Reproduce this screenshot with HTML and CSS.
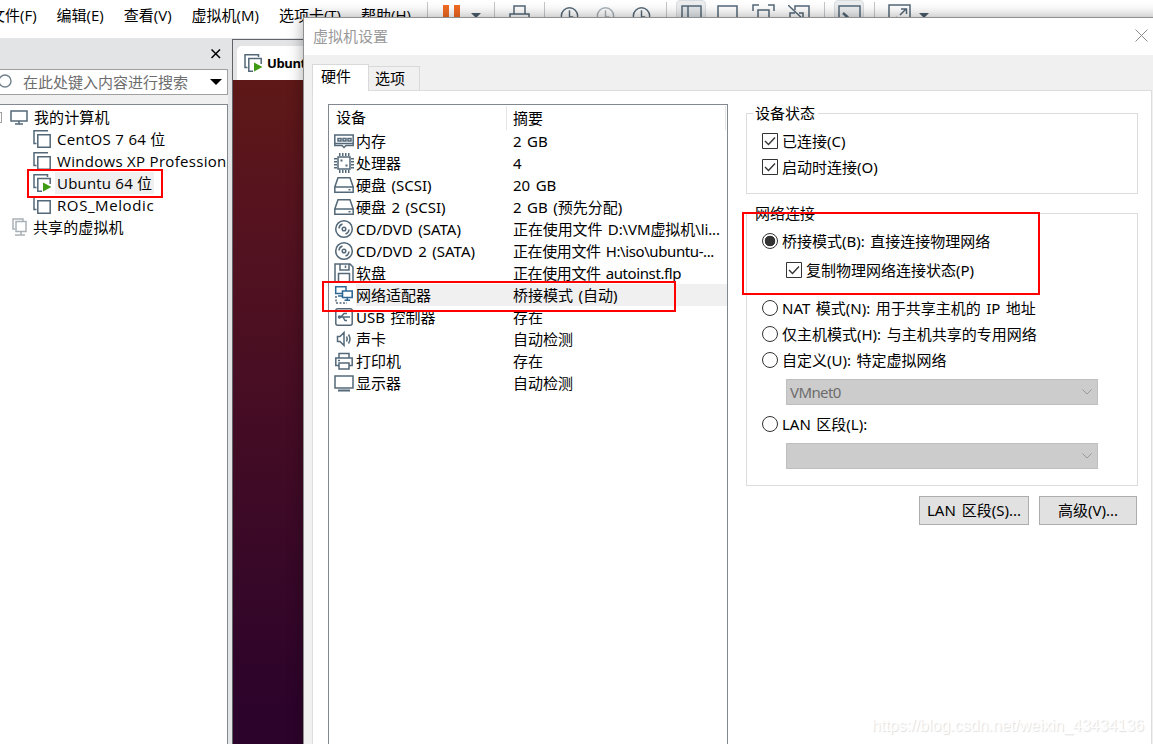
FILE: index.html
```
<!DOCTYPE html>
<html lang="zh-CN">
<head>
    <meta charset="UTF-8">
    <title>虚拟机设置</title>
    <link rel="stylesheet" href="styles.css">
</head>
<body>

    <!-- shared icons -->
    <svg class="defs">
        <symbol id="vm" viewBox="0 0 18 18">
            <path class="line" d="M3.5 13.5H1V.8H15" />
            <path class="line" d="M4.8 4.8H17.2V17.2H4.8Z" />
        </symbol>
        <symbol id="vm-on" viewBox="0 0 18 18">
            <path class="line" d="M3.5 13.5H1V.8H14.5V3" />
            <path class="line" d="M9 17.2H4.8V4.5H17.2V10" />
            <path fill="#3f9c12" d="M10 8.5L18.5 13L10 17.5Z" />
        </symbol>
        <symbol id="clock" viewBox="0 0 20 20">
            <circle class="line" cx="10" cy="10" r="8.6" />
            <path class="line" d="M10 4V11H14" />
        </symbol>
        <symbol id="disk" viewBox="0 0 20 18">
            <path class="line" d="M4 1.7H16L19.2 11V16.2H.8V11ZM.8 11H19.2" />
            <path class="line" d="M14.5 13.7H16.5" />
        </symbol>
        <symbol id="disc" viewBox="0 0 20 20">
            <circle class="line" cx="10" cy="10" r="8.3" />
            <circle class="line" cx="10" cy="10" r="1.8" />
            <path class="line" d="M5 9.5Q5.2 6 8.5 5M15 10.5Q14.8 14 11.5 15" />
        </symbol>
        <symbol id="check" viewBox="0 0 16 16">
            <path d="M.5.5H15.5V15.5H.5Z" fill="#fff" stroke="#333" />
            <path d="M3 8L6.5 11.4L13 4.6" fill="none" stroke="#333" stroke-width="1.4" />
        </symbol>
        <symbol id="chevron" viewBox="0 0 10 6">
            <path d="M.5.5L5 5L9.5.5" fill="none" stroke="#999" />
        </symbol>
    </svg>

    <div class="app">
        <div class="menubar">
            <span>文件(F)</span>
            <span>编辑(E)</span>
            <span>查看(V)</span>
            <span>虚拟机(M)</span>
            <span>选项卡(T)</span>
            <span class="last">帮助(H)</span>
            <div class="toolbar">
                <i class="sep"></i>
                <svg class="t-pause" width="17" height="22"><path fill="#f26a21" d="M0 0H6V22H0ZM11 0H17V22H11Z" /></svg>
                <svg class="t-arrow" width="10" height="22"><path fill="#4a5c6a" d="M0 8H10L5 13Z" /></svg>
                <i class="sep s2"></i>
                <svg class="t-print" width="21" height="22"><path class="line" d="M5 9V1H16V9M1 16V9H20V16M5 20V14H16V20" /></svg>
                <i class="sep s3"></i>
                <svg class="t-clock" width="19" height="20"><use href="#clock" /></svg>
                <svg class="t-clock2 dim" width="19" height="20"><use href="#clock" /></svg>
                <svg class="t-clock2" width="19" height="20"><use href="#clock" /></svg>
                <i class="sep s4"></i>
                <div class="pressed p1"><svg width="21" height="22"><path fill="#e3e7ea" d="M1 1H20V22H1Z" /><path class="line" d="M1 22V1H20V22M7 1V22" /></svg></div>
                <svg class="t-rect" width="21" height="22"><path class="line" d="M1 17V1H20V17Z" /></svg>
                <svg class="t-full" width="23" height="22"><path class="line" d="M1 7V1H7M16 1H22V7M6 20V6H17V20" /></svg>
                <svg class="t-unity" width="23" height="22"><path class="line" d="M7 5V1H21V14H17M2 20V8H7M11 8H15V13" /><path class="line" d="M0 0L16 15" /></svg>
                <i class="sep s5"></i>
                <div class="pressed p2"><svg width="23" height="22"><path class="line" d="M1 22V1H22V22" /><path class="line thick" d="M5 8L9 11.5L5 15" /></svg></div>
                <i class="sep s6"></i>
                <svg class="t-fit" width="23" height="22"><path class="line" d="M1 22V1H22V22M13 5H18.5V10M18 5L12 11M9 13L4 17" /></svg>
                <svg class="t-arrow2" width="10" height="22"><path fill="#4a5c6a" d="M0 9H10L5 14Z" /></svg>
            </div>
        </div>

        <div class="main">
            <div class="sidebar">
                <div class="side-head">
                    <svg width="10" height="10"><path d="M.5.5L9 9M9 .5L.5 9" stroke="#000" stroke-width="1.5" /></svg>
                </div>
                <div class="search">
                    <svg width="15" height="18"><circle cx="5" cy="8" r="6" fill="none" stroke="#70808c" stroke-width="1.4" /></svg>
                    <span>在此处键入内容进行搜索</span>
                    <svg width="12" height="7"><path d="M0 0H12L6 6Z" /></svg>
                </div>
                <div class="tree">
                    <div class="node root">
                        <i class="expander"></i>
                        <svg width="18" height="16"><path class="line" d="M1 2H17V12H1ZM9 12V15M5 15H13" /></svg>
                        <span>我的计算机</span>
                    </div>
                    <div class="node"><svg width="18" height="18"><use href="#vm" /></svg><span>CentOS 7 64 位</span></div>
                    <div class="node"><svg width="18" height="18"><use href="#vm" /></svg><span>Windows XP Profession</span></div>
                    <div class="node"><svg width="18" height="18"><use href="#vm-on" /></svg><span class="selected">Ubuntu 64 位</span></div>
                    <div class="node"><svg width="18" height="18"><use href="#vm" /></svg><span class="loose">ROS_Melodic</span></div>
                    <div class="node shared">
                        <svg width="15" height="18"><path class="line" d="M3 11H1V1H11V3M4 3.5H14V13.5H4ZM9 14V17M3 17H13" /></svg>
                        <span>共享的虚拟机</span>
                    </div>
                </div>
            </div>
            <div class="vm-pane">
                <div class="vm-tabs">
                    <div class="vm-tab"><svg width="18" height="18"><use href="#vm-on" /></svg><span>Ubuntu</span></div>
                </div>
                <div class="vm-screen"></div>
            </div>
        </div>
    </div>

    <div class="dialog">
        <div class="titlebar">
            <span>虚拟机设置</span>
            <svg width="13" height="13"><path d="M.5.5L12.5 12.5M12.5.5L.5 12.5" stroke="#8a8a8a" /></svg>
        </div>
        <div class="tabs">
            <div class="tab active">硬件</div>
            <div class="tab">选项</div>
        </div>
        <div class="page">
            <div class="devices">
                <div class="row head"><span class="name">设备</span><span class="info">摘要</span></div>
                <div class="row">
                    <svg width="20" height="18"><path class="line" d="M.8 3H19.2V13.5H12L10 15.5L8 13.5H.8Z" /><path class="line" d="M4 6.5H7V9H4ZM9 6.5H12V9H9ZM14 6.5H17V9H14ZM1 11.5H19" /></svg>
                    <span class="name">内存</span><span class="info">2 GB</span>
                </div>
                <div class="row">
                    <svg width="20" height="20"><path class="line" d="M4 4H16V16H4Z" /><path class="line dots" d="M5 1.5H16M5 18.5H16M1.5 5V16M18.5 5V16" /><path fill="#536878" d="M6.5 6.5H8.5V8.5H6.5ZM11.5 11.5H13.5V13.5H11.5Z" /></svg>
                    <span class="name">处理器</span><span class="info">4</span>
                </div>
                <div class="row"><svg width="20" height="18"><use href="#disk" /></svg><span class="name">硬盘 (SCSI)</span><span class="info">20 GB</span></div>
                <div class="row"><svg width="20" height="18"><use href="#disk" /></svg><span class="name">硬盘 2 (SCSI)</span><span class="info">2 GB (预先分配)</span></div>
                <div class="row"><svg width="20" height="20"><use href="#disc" /></svg><span class="name">CD/DVD (SATA)</span><span class="info iso">正在使用文件 D:\VM虚拟机\li...</span></div>
                <div class="row"><svg width="20" height="20"><use href="#disc" /></svg><span class="name">CD/DVD 2 (SATA)</span><span class="info file">正在使用文件 H:\iso\ubuntu-...</span></div>
                <div class="row">
                    <svg width="20" height="20"><path class="line" d="M1 1H16L19 4V19H1ZM6 1V7H15V1M4.5 19V10.5H15.5V19M11.5 2.5V5" /></svg>
                    <span class="name">软盘</span><span class="info file">正在使用文件 autoinst.flp</span>
                </div>
                <div class="row picked">
                    <svg width="20" height="20"><path class="line dash" d="M2 11V18H13" /><path class="line blue" d="M1.7 1.7H12V8.5H1.7ZM4 11H9" /><path class="blue" fill="#fff" d="M8.5 6H18.2V12.5H8.5ZM13.3 12.5V15M10.5 15.3H16" stroke-width="1.6" /></svg>
                    <span class="name">网络适配器</span><span class="info">桥接模式 (自动)</span>
                </div>
                <div class="row">
                    <svg width="20" height="20"><rect class="line" x="1.8" y="1.8" width="16.4" height="16.4" rx="2" /><path class="line" d="M5 10H16M7 10L10 6.5H13M9 10L11 13.5H13" /><circle cx="5.5" cy="10" r="1.8" fill="#536878" /></svg>
                    <span class="name">USB 控制器</span><span class="info">存在</span>
                </div>
                <div class="row">
                    <svg width="20" height="18"><path class="line" d="M3.5 6.5H6L10 2.5V15.5L6 11.5H3.5ZM12.5 6.5Q14 9 12.5 11.5M14.5 4.5Q17.5 9 14.5 13.5" /></svg>
                    <span class="name">声卡</span><span class="info">自动检测</span>
                </div>
                <div class="row">
                    <svg width="20" height="20"><path class="line" d="M5 7V2.5H15V7M5 14.5H1.8V7H18.2V14.5H15M5 12H15V18H5ZM4 9.5H6" /></svg>
                    <span class="name">打印机</span><span class="info">存在</span>
                </div>
                <div class="row">
                    <svg width="20" height="18"><path class="line" d="M1 2H19V14H1Z" stroke-width="2" /><path fill="#536878" d="M4 15.5H16V17.5H4Z" /></svg>
                    <span class="name">显示器</span><span class="info">自动检测</span>
                </div>
            </div>

            <div class="settings">
                <fieldset class="status">
                    <legend>设备状态</legend>
                    <label class="option"><svg width="16" height="16"><use href="#check" /></svg>已连接(C)</label>
                    <label class="option"><svg width="16" height="16"><use href="#check" /></svg>启动时连接(O)</label>
                </fieldset>
                <fieldset class="network">
                    <legend>网络连接</legend>
                    <label class="option"><i class="radio on"></i>桥接模式(B): 直接连接物理网络</label>
                    <label class="option sub"><svg width="16" height="16"><use href="#check" /></svg>复制物理网络连接状态(P)</label>
                    <label class="option"><i class="radio"></i>NAT 模式(N): 用于共享主机的 IP 地址</label>
                    <label class="option"><i class="radio"></i>仅主机模式(H): 与主机共享的专用网络</label>
                    <label class="option"><i class="radio"></i>自定义(U): 特定虚拟网络</label>
                    <div class="select"><span>VMnet0</span><svg width="10" height="6"><use href="#chevron" /></svg></div>
                    <label class="option"><i class="radio"></i>LAN 区段(L):</label>
                    <div class="select"><span></span><svg width="10" height="6"><use href="#chevron" /></svg></div>
                </fieldset>
                <div class="buttons">
                    <button class="btn btn-lan">LAN 区段(S)...</button>
                    <button class="btn btn-adv">高级(V)...</button>
                </div>
            </div>
        </div>
    </div>

    <!-- red highlight frames -->
    <div class="mark mark-vm"></div>
    <div class="mark mark-adapter"></div>
    <div class="mark mark-bridge"></div>
    <div class="watermark">https://blog.csdn.net/weixin_43434136</div>

</body>
</html>
```
FILE: styles.css
```
* {
    box-sizing: border-box;
}
body {
    margin: 0;
    width: 1153px;
    height: 744px;
    overflow: hidden;
    position: relative;
    background: #fff;
    color: #000;
    font-family: "Open Sans", "Noto Sans CJK SC", sans-serif;
    font-size: 15px;
    line-height: 22px;
    white-space: nowrap;
}
svg {
    display: block;
    flex: none;
}
i {
    flex: none;
}
.defs {
    position: absolute;
    width: 0;
    height: 0;
}
.line {
    fill: none;
    stroke: #536878;
    stroke-width: 1.5;
}
.thick {
    stroke-width: 2.5;
}
.blue {
    stroke: #2f6a96;
}
.dash {
    stroke-dasharray: 2 1.5;
}
.dots {
    stroke-width: 3;
    stroke-dasharray: 1.5 1.5;
}
.dim {
    opacity: 0.5;
}

/* main window */
.app {
    height: 744px;
    display: flex;
    flex-direction: column;
}
.menubar {
    height: 38px;
    padding-top: 4px;
    display: flex;
    align-items: flex-start;
}
.menubar span {
    flex: none;
    margin-right: 20px;
}
.menubar span:first-child {
    margin-left: -10px;
}
.menubar .last {
    width: 66px;
    margin-right: 0;
}
.toolbar {
    display: flex;
    align-items: flex-start;
}
.sep {
    width: 1px;
    height: 30px;
    margin-top: -2px;
    background: #c4c8cb;
}
.t-pause { margin: 1px 0 0 15px; }
.t-arrow { margin: 1px 0 0 11px; }
.s2 { margin-left: 13px; }
.t-print { margin: 1px 0 0 14px; }
.s3 { margin-left: 14px; }
.t-clock { margin: 2px 0 0 15px; }
.t-clock2 { margin: 2px 0 0 17px; }
.s4 { margin-left: 15px; }
.t-rect { margin: 1px 0 0 11px; }
.t-full { margin-left: 14px; }
.t-unity { margin: 1px 0 0 13px; }
.s5 { margin-left: 13px; }
.s6 { margin-left: 10px; }
.t-fit { margin-left: 13px; }
.t-arrow2 { margin-left: 8px; }
.pressed {
    width: 30px;
    height: 30px;
    margin: -4px 0 0 9px;
    padding: 4px 0 0 4px;
    background: #eceef0;
    border: 1px solid #dcdfe1;
    border-radius: 4px;
}
.p2 {
    padding-left: 3px;
}

.main {
    flex: 1;
    display: flex;
    background: #e3e4e6;
}
.sidebar {
    width: 228px;
    display: flex;
    flex-direction: column;
}
.side-head {
    height: 31px;
    padding: 11px 7px 0 0;
    display: flex;
    justify-content: flex-end;
}
.search {
    height: 26px;
    display: flex;
    align-items: center;
    background: #fff;
    border: 1px solid #a0a0a0;
    border-width: 1px 1px 1px 0;
    padding-right: 5px;
    color: #6d6d6d;
}
.search span {
    flex: 1;
    padding-left: 8px;
}
.tree {
    flex: 1;
    margin-top: 9px;
    padding-top: 1px;
    background: #fff;
    border: 1px solid #828790;
    border-width: 1px 1px 0 0;
    overflow: hidden;
    box-shadow: 0 -9px 0 #f0f0f0;
}
.node {
    height: 22px;
    display: flex;
    align-items: center;
    padding-left: 33px;
}
.node span {
    margin-left: 4px;
    padding: 0 2px;
    letter-spacing: 0.3px;
}
.node .loose {
    letter-spacing: 0.6px;
}
.node .selected {
    letter-spacing: 0.2px;
    background: #f0f0f0;
}
.root {
    padding-left: 0;
}
.node.root span,
.node.shared span {
    letter-spacing: 0.1px;
}
.expander {
    width: 2px;
    height: 11px;
    margin-right: 8px;
    border: 1px solid #a0a0a0;
    border-left: none;
}
.shared {
    padding-left: 12px;
}
.shared .line {
    stroke: #a9b1b7;
}
.vm-pane {
    flex: 1;
    margin: 1px 0 0 4px;
    border-top: 1px solid #606468;
    border-left: 1px solid #606468;
    display: flex;
    flex-direction: column;
}
.vm-tabs {
    height: 40px;
    padding: 6px 0 0 4px;
}
.vm-tab {
    width: 140px;
    height: 34px;
    padding-left: 7px;
    display: flex;
    align-items: center;
    gap: 5px;
    background: #fff;
    border-radius: 5px 5px 0 0;
    font-size: 13px;
    font-weight: bold;
    letter-spacing: -0.4px;
}
.vm-screen {
    flex: 1;
    background: linear-gradient(#5e1817, #56131f 20%, #2c032b 95%);
}

/* settings dialog */
.dialog {
    position: absolute;
    left: 303px;
    top: 17px;
    width: 870px;
    height: 740px;
    background: #f0f0f0;
    border: 1px solid #8f8f8f;
    box-shadow: 0 0 14px rgba(0, 0, 0, 0.35);
    font-family: "Noto Sans", "Noto Sans CJK SC", sans-serif;
    word-spacing: 1.6px;
}
.titlebar {
    height: 37px;
    padding: 0 24px 2px 9px;
    display: flex;
    align-items: center;
    justify-content: space-between;
    background: #fff;
    color: #999;
}
.tabs {
    height: 35px;
    padding-left: 8px;
    display: flex;
    align-items: flex-end;
}
.tab {
    width: 51px;
    height: 24px;
    padding-left: 6px;
    border: 1px solid #d9d9d9;
    border-left: none;
    border-bottom: none;
}
.tab.active {
    position: relative;
    width: 57px;
    height: 27px;
    margin-bottom: -1px;
    padding-left: 8px;
    border-left: 1px solid #d9d9d9;
    background: #fff;
}
.page {
    width: 840px;
    height: 670px;
    margin-left: 8px;
    padding: 13px 13px 0 15px;
    display: flex;
    align-items: flex-start;
    background: #fff;
    border: 1px solid #dcdcdc;
}
.devices {
    width: 400px;
    height: 660px;
    border: 1px solid #828790;
    padding-top: 1px;
}
.row {
    height: 22px;
    padding-left: 5px;
    display: flex;
    align-items: center;
}
.row .name {
    width: 157px;
    padding-left: 2px;
}
.row.head {
    height: 24px;
    margin-right: 1px;
    padding-left: 0;
    border-right: 1px solid #e5e5e5;
}
.head .name {
    width: 178px;
    height: 24px;
    padding-left: 7px;
    border-right: 1px solid #e5e5e5;
}
.head .info {
    margin-left: 6px;
}
.row.picked {
    background: linear-gradient(#f0f0f0, #f0f0f0) 27px 0 no-repeat;
}
.info {
    margin-left: 2px;
}
.info.iso {
    letter-spacing: -0.1px;
}
.info.file {
    letter-spacing: -0.4px;
}
.settings {
    width: 392px;
    margin-left: 18px;
}
fieldset {
    min-width: 0;
    margin: 0;
    padding: 6px 0 0 15px;
    border: 1px solid #dcdcdc;
}
legend {
    height: 18px;
    margin-left: -9px;
    padding: 0 3px 0 2px;
    line-height: 18px;
}
.status {
    height: 90px;
}
.network {
    height: 282px;
    margin-top: 10px;
}
.option {
    height: 26px;
    display: flex;
    align-items: center;
    gap: 4px;
}
.option.sub {
    margin: 3px 0 12px 24px;
}
.radio {
    width: 16px;
    height: 16px;
    border: 1px solid #333;
    border-radius: 50%;
    background: #fff;
}
.radio.on {
    background: radial-gradient(circle, #333 5px, #fff 5.6px);
}
.select {
    width: 312px;
    height: 26px;
    margin: 6px 0 6px 24px;
    padding: 0 5px 0 3px;
    display: flex;
    align-items: center;
    justify-content: space-between;
    background: #ccc;
    border: 1px solid #bfbfbf;
    color: #6d6d6d;
    letter-spacing: -0.6px;
}
.buttons {
    margin-top: 10px;
    display: flex;
    justify-content: flex-end;
    gap: 10px;
    padding-right: 1px;
}
.btn {
    height: 29px;
    padding: 0 0 2px;
    background: #e1e1e1;
    border: 1px solid #adadad;
    color: #000;
    font: inherit;
    word-spacing: 2px;
}
.btn-lan {
    width: 110px;
}
.btn-adv {
    width: 98px;
}

/* overlays */
.mark {
    position: absolute;
    border: 2px solid #f00;
}
.mark-vm {
    left: 27px;
    top: 169px;
    width: 136px;
    height: 29px;
}
.mark-adapter {
    left: 322px;
    top: 281px;
    width: 354px;
    height: 31px;
}
.mark-bridge {
    left: 742px;
    top: 212px;
    width: 298px;
    height: 83px;
}
.watermark {
    position: absolute;
    right: 9px;
    top: 715px;
    color: #fff;
    font-family: "Liberation Sans", sans-serif;
    font-size: 16px;
    text-shadow: 1px 1px 1px #ddd;
}
```
